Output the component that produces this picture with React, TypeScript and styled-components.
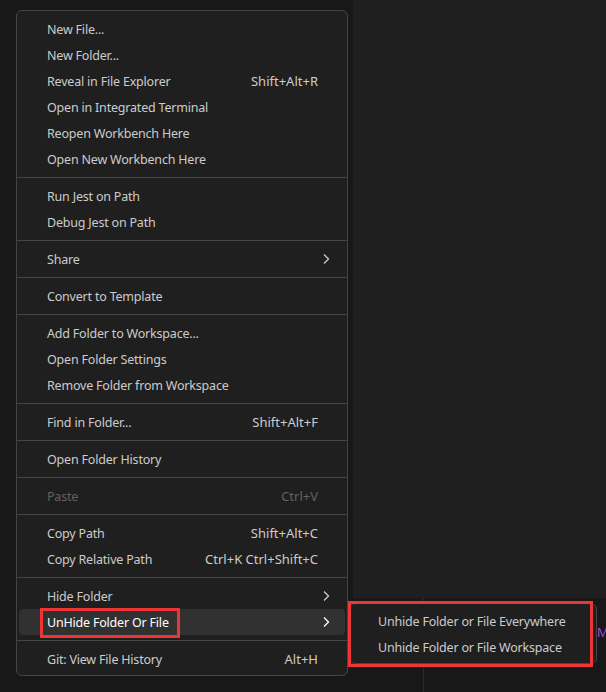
import React from 'react'
import styled, { createGlobalStyle } from 'styled-components'

const GlobalStyle = createGlobalStyle`
  html, body {
    margin: 0;
    padding: 0;
    background: #181818;
  }
  body {
    font-family: "Noto Sans", "Open Sans", sans-serif;
    -webkit-font-smoothing: antialiased;
  }
`;

const Screen = styled.div`
  position: relative;
  display: flex;
  width: 606px;
  height: 692px;
  overflow: hidden;
  background: #181818;
`;

const Sidebar = styled.aside`
  width: 353px;
  flex: none;
  padding: 10px 0 0 16px;
  box-sizing: border-box;
  background: #181818;
`;

const Workbench = styled.main`
  flex: 1;
  display: flex;
  flex-direction: column;
`;

const Editor = styled.section`
  height: 598px;
  background: #1f1f1f;
`;

const Panel = styled.section`
  flex: 1;
  display: flex;
  background: #181818;
`;

const PanelGutter = styled.div`
  width: 70px;
  border-right: 1px solid #2b2b2b;
`;

const PanelBody = styled.div`
  flex: 1;
  padding: 22px 0 0 173px;
`;

const Glyph = styled.span`
  font-size: 13px;
  line-height: 16px;
  background: linear-gradient(90deg, #c04ee0, #6c5bff);
  -webkit-background-clip: text;
  background-clip: text;
  color: transparent;
`;

const Menu = styled.div`
  width: 332px;
  box-sizing: border-box;
  padding: 5px 0 3px;
  background: #1f1f1f;
  border: 1px solid #454545;
  border-radius: 6px;
  font-size: 12.5px;
  letter-spacing: -0.2px;
  color: #cccccc;
`;

const Row = styled.div<{ $active?: boolean; $disabled?: boolean }>`
  position: relative;
  display: flex;
  align-items: center;
  height: 26px;
  margin: 0 2px;
  padding: 0 27px 0 28px;
  border-radius: 4px;
  background: ${(p) => (p.$active ? '#313131' : 'transparent')};
  color: ${(p) => (p.$disabled ? '#626262' : p.$active ? '#ffffff' : '#cccccc')};
  white-space: nowrap;
`;

const Label = styled.span<{ $marked?: boolean }>`
  position: relative;
  flex: 1;
  flex-grow: ${(p) => (p.$marked ? 0 : 1)};
  &::after {
    content: '';
    display: ${(p) => (p.$marked ? 'block' : 'none')};
    position: absolute;
    left: -7px;
    right: -11px;
    top: -6px;
    bottom: -7px;
    border: 3px solid #ef3535;
  }
`;

const Spacer = styled.span`
  flex: 1;
`;

const Shortcut = styled.span`
  margin-left: 24px;
  font-size: 13px;
  letter-spacing: 0;
`;

const Chevron = styled.svg`
  position: absolute;
  right: 15px;
  top: 7px;
  width: 8px;
  height: 12px;
`;

const Separator = styled.div`
  height: 1px;
  margin: 5px 0;
  background: #454545;
`;

const SubMenu = styled.div`
  position: absolute;
  left: 349px;
  top: 603px;
  width: 248px;
  box-sizing: border-box;
  padding: 4px 0 3px;
  background: #1f1f1f;
  border: 1px solid #454545;
  border-radius: 6px;
  font-size: 12.5px;
  letter-spacing: -0.2px;
  color: #cccccc;
`;

const SubRow = styled.div`
  height: 26px;
  display: flex;
  align-items: center;
  padding-left: 28px;
  white-space: nowrap;
`;

const Callout = styled.div`
  position: absolute;
  left: 348px;
  top: 601px;
  width: 245px;
  height: 66px;
  box-sizing: border-box;
  border: 3px solid #ef3535;
  pointer-events: none;
`;

type Item = {
  label: string
  shortcut?: string
  submenu?: boolean
  disabled?: boolean
  active?: boolean
  marked?: boolean
}

const groups: Item[][] = [
  [
    { label: 'New File...' },
    { label: 'New Folder...' },
    { label: 'Reveal in File Explorer', shortcut: 'Shift+Alt+R' },
    { label: 'Open in Integrated Terminal' },
    { label: 'Reopen Workbench Here' },
    { label: 'Open New Workbench Here' },
  ],
  [{ label: 'Run Jest on Path' }, { label: 'Debug Jest on Path' }],
  [{ label: 'Share', submenu: true }],
  [{ label: 'Convert to Template' }],
  [
    { label: 'Add Folder to Workspace...' },
    { label: 'Open Folder Settings' },
    { label: 'Remove Folder from Workspace' },
  ],
  [{ label: 'Find in Folder...', shortcut: 'Shift+Alt+F' }],
  [{ label: 'Open Folder History' }],
  [{ label: 'Paste', shortcut: 'Ctrl+V', disabled: true }],
  [
    { label: 'Copy Path', shortcut: 'Shift+Alt+C' },
    { label: 'Copy Relative Path', shortcut: 'Ctrl+K Ctrl+Shift+C' },
  ],
  [
    { label: 'Hide Folder', submenu: true },
    { label: 'UnHide Folder Or File', submenu: true, active: true, marked: true },
  ],
  [{ label: 'Git: View File History', shortcut: 'Alt+H' }],
]

const ChevronIcon = () => (
  <Chevron viewBox="0 0 8 12">
    <path d="M2 1.5 L6.5 6 L2 10.5" fill="none" stroke="currentColor" strokeWidth="1.3" />
  </Chevron>
)

const MenuRow = ({ item }: { item: Item }) => (
  <Row $active={item.active} $disabled={item.disabled}>
    <Label $marked={item.marked}>{item.label}</Label>
    {item.marked && <Spacer />}
    {item.shortcut && <Shortcut>{item.shortcut}</Shortcut>}
    {item.submenu && <ChevronIcon />}
  </Row>
)

const App = () => {
  return (
    <Screen>
      <GlobalStyle />
      <Sidebar>
        <Menu>
          {groups.map((group, i) => (
            <React.Fragment key={i}>
              {i > 0 && <Separator />}
              {group.map((item) => (
                <MenuRow key={item.label} item={item} />
              ))}
            </React.Fragment>
          ))}
        </Menu>
      </Sidebar>
      <Workbench>
        <Editor />
        <Panel>
          <PanelGutter />
          <PanelBody>
            <Glyph>M</Glyph>
          </PanelBody>
        </Panel>
      </Workbench>
      <SubMenu>
        <SubRow>Unhide Folder or File Everywhere</SubRow>
        <SubRow>Unhide Folder or File Workspace</SubRow>
      </SubMenu>
      <Callout />
    </Screen>
  )
}

export default App
